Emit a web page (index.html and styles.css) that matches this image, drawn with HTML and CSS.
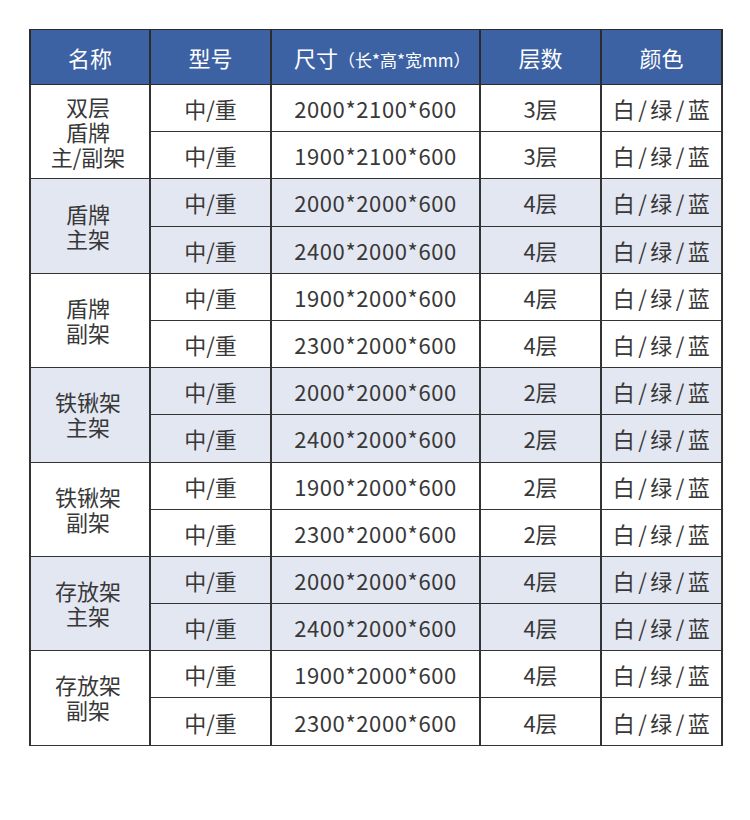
FILE: index.html
```html
<!DOCTYPE html>
<html lang="zh">
<head>
<meta charset="utf-8">
<link rel="stylesheet" href="styles.css">
</head>
<body>
<table class="spec">
  <colgroup>
    <col class="c-name"><col class="c-model"><col class="c-size"><col class="c-layer"><col class="c-color">
  </colgroup>
  <thead>
    <tr><th>名称</th><th>型号</th><th class="size-h">尺寸<span class="unit">（长*高*宽mm）</span></th><th>层数</th><th>颜色</th></tr>
  </thead>
  <tbody>
    <tr><td rowspan="2" class="name">双层<br>盾牌<br>主/副架</td><td>中/重</td><td class="num">2000*2100*600</td><td>3层</td><td class="color">白/绿/蓝</td></tr>
    <tr><td>中/重</td><td class="num">1900*2100*600</td><td>3层</td><td class="color">白/绿/蓝</td></tr>

    <tr class="alt"><td rowspan="2" class="name">盾牌<br>主架</td><td>中/重</td><td class="num">2000*2000*600</td><td>4层</td><td class="color">白/绿/蓝</td></tr>
    <tr class="alt"><td>中/重</td><td class="num">2400*2000*600</td><td>4层</td><td class="color">白/绿/蓝</td></tr>

    <tr><td rowspan="2" class="name">盾牌<br>副架</td><td>中/重</td><td class="num">1900*2000*600</td><td>4层</td><td class="color">白/绿/蓝</td></tr>
    <tr><td>中/重</td><td class="num">2300*2000*600</td><td>4层</td><td class="color">白/绿/蓝</td></tr>

    <tr class="alt"><td rowspan="2" class="name">铁锹架<br>主架</td><td>中/重</td><td class="num">2000*2000*600</td><td>2层</td><td class="color">白/绿/蓝</td></tr>
    <tr class="alt"><td>中/重</td><td class="num">2400*2000*600</td><td>2层</td><td class="color">白/绿/蓝</td></tr>

    <tr><td rowspan="2" class="name">铁锹架<br>副架</td><td>中/重</td><td class="num">1900*2000*600</td><td>2层</td><td class="color">白/绿/蓝</td></tr>
    <tr><td>中/重</td><td class="num">2300*2000*600</td><td>2层</td><td class="color">白/绿/蓝</td></tr>

    <tr class="alt"><td rowspan="2" class="name">存放架<br>主架</td><td>中/重</td><td class="num">2000*2000*600</td><td>4层</td><td class="color">白/绿/蓝</td></tr>
    <tr class="alt"><td>中/重</td><td class="num">2400*2000*600</td><td>4层</td><td class="color">白/绿/蓝</td></tr>

    <tr><td rowspan="2" class="name">存放架<br>副架</td><td>中/重</td><td class="num">1900*2000*600</td><td>4层</td><td class="color">白/绿/蓝</td></tr>
    <tr><td>中/重</td><td class="num">2300*2000*600</td><td>4层</td><td class="color">白/绿/蓝</td></tr>
  </tbody>
</table>
</body>
</html>
```

FILE: styles.css
```css
html, body {
  margin: 0;
  padding: 0;
  background: #ffffff;
}
body {
  padding: 29px 0 0 29px;
  font-family: "Noto Sans CJK SC", "Noto Sans", sans-serif;
  color: #383838;
}
.spec {
  border-collapse: collapse;
  table-layout: fixed;
  width: 692px;
}
.c-name { width: 120px; }
.c-model { width: 121px; }
.c-size { width: 209px; }
.c-layer { width: 121px; }
.c-color { width: 121px; }

.spec th {
  height: 54px;
  padding: 0;
  background: #3c62a4;
  color: #ffffff;
  font-size: 22px;
  font-weight: 400;
  line-height: 1;
  border: 1px solid #2b2b2b;
  border-left-width: 2px;
  border-right-width: 2px;
  text-align: center;
  vertical-align: middle;
  white-space: nowrap;
}
.spec th.size-h {
  text-align: left;
  padding-left: 22px;
}
.spec th .unit {
  font-size: 17px;
  font-weight: 400;
}
.spec td {
  height: 46.2px;
  padding: 0;
  font-size: 22px;
  font-weight: 400;
  line-height: 1;
  text-align: center;
  vertical-align: middle;
  border: 1px solid #333333;
  border-left-width: 2px;
  border-right-width: 2px;
  white-space: nowrap;
}
.spec td.num {
  letter-spacing: 0.6px;
}
.spec td.name {
  font-size: 22px;
  line-height: 25px;
  padding: 0 4px 1px 0;
}
.spec td.color {
  letter-spacing: 3.5px;
  padding-left: 3px;
}
.spec tr.alt td {
  background: #e3e7f2;
}
```
